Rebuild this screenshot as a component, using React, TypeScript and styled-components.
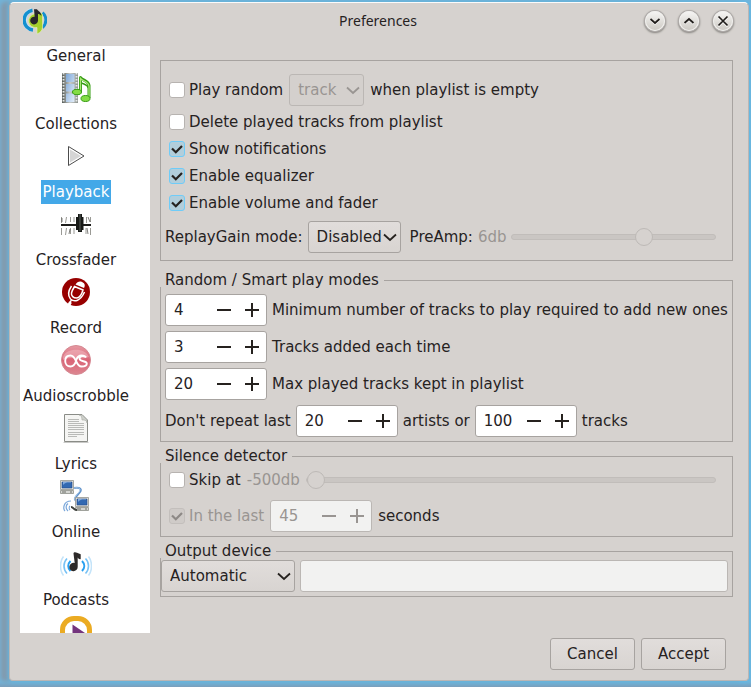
import React, { useState } from "react";
import styled, { createGlobalStyle, css } from "styled-components";

const color = {
  window: "#d6d2cf",
  text: "#26221f",
  muted: "#999592",
  line: "#a7a3a0",
  faintLine: "#bbb7b4",
  highlight: "#43a8e8",
};

const GlobalStyle = createGlobalStyle`
  * { box-sizing: border-box; }
  body { margin: 0; font: 15px/20px "DejaVu Sans", sans-serif; color: ${color.text}; }
  button, input, select { font: inherit; color: inherit; margin: 0; }
`;

const Desktop = styled.div`
  height: 100vh;
  min-height: 640px;
  padding: 2px 2px 6px 9px;
  background: linear-gradient(to bottom, #72b3d8 calc(100% - 5px), #7b9dba);
  display: flex;
`;

const Window = styled.main`
  flex: 1;
  min-width: 0;
  display: flex;
  flex-direction: column;
  background: ${color.window};
  border: 1px solid #bab6b5;
  border-top-color: #fbfbfb;
  border-radius: 5px 5px 4px 4px;
  box-shadow: 0 0 5px 1px #5fbbe9, -8px 0 4px 0 #8598aa;
`;

const TitleBar = styled.header`
  display: grid;
  grid-template-columns: 1fr auto 1fr;
  align-items: center;
  height: 36px;
  padding: 0 15px 0 13px;
  flex: none;
`;

const Title = styled.h1`
  margin: 0;
  font: 14px/20px "Noto Sans", sans-serif;
`;

const WindowControls = styled.div`
  display: flex;
  justify-content: flex-end;
  gap: 14px;
`;

const RoundButton = styled.button`
  width: 20px;
  height: 20px;
  padding: 0;
  border: 0;
  border-radius: 50%;
  display: grid;
  place-items: center;
  background: linear-gradient(#f7f6f5, #cbc8c2);
  box-shadow: 0 0 0 1px #b0acaa, 0 1px 2px 1px #83807d, inset 0 0 0 1px #f0efed;
  svg { display: block; }
`;

const Body = styled.div`
  flex: 1;
  min-height: 0;
  display: flex;
  gap: 10px;
  padding: 7px 15px 0 10px;
`;

const Sidebar = styled.nav`
  flex: none;
  width: 130px;
  padding-right: 18px;
  overflow: hidden;
  background: #fff;
`;

const PageList = styled.ul`
  list-style: none;
  margin: -2px 0 0;
  padding: 0;
`;

const PageLink = styled.a`
  display: flex;
  flex-direction: column;
  align-items: center;
  color: inherit;
  text-decoration: none;
  svg { display: block; margin: 4px 0 8px; }
`;

const PageName = styled.span<{ $active?: boolean }>`
  line-height: 24px;
  padding: 0 2px;
  white-space: nowrap;
  ${(p) => p.$active && css`background: ${color.highlight}; color: #fff;`}
`;

const Settings = styled.form`
  flex: 1;
  min-width: 0;
  padding-top: 14px;
`;

const Group = styled.fieldset<{ $pad: string; $gap?: number; $top?: number }>`
  margin: ${(p) => p.$top ?? 0}px 0 0;
  min-width: 0;
  border: 1px solid ${color.line};
  padding: ${(p) => p.$pad};
  display: flex;
  flex-direction: column;
  gap: ${(p) => p.$gap ?? 0}px;
`;

const Legend = styled.legend`
  margin-left: -1px;
  padding: 0 5px;
  line-height: 14px;
  background: ${color.window};
`;

const Row = styled.div<{ $gap?: number; $height?: number; $indent?: number }>`
  display: flex;
  align-items: center;
  gap: ${(p) => p.$gap ?? 5}px;
  height: ${(p) => p.$height ?? 32}px;
  padding-left: ${(p) => p.$indent ?? 4}px;
  white-space: nowrap;
`;

const Muted = styled.output`
  color: ${color.muted};
`;

const CheckLabel = styled.label<{ $disabled?: boolean }>`
  display: flex;
  align-items: center;
  gap: 4px;
  color: ${(p) => (p.$disabled ? color.muted : "inherit")};
`;

const checkMark = (stroke: string) =>
  `url("data:image/svg+xml,%3Csvg xmlns='http://www.w3.org/2000/svg' width='14' height='14' fill='none' stroke='%23${stroke}' stroke-width='2.2'%3E%3Cpath d='M2 6.5 5.8 10.2 12 4'/%3E%3C/svg%3E")`;

const Tick = styled.input`
  appearance: none;
  width: 16px;
  height: 16px;
  border: 1px solid #b7b3b0;
  border-radius: 3px;
  background: #fff;
  &:checked {
    border-color: #6fccf8;
    background: #b2cedb ${checkMark("26221f")} center / 14px no-repeat;
  }
  &:disabled {
    border-color: #c3bfbc;
    background: #cfcbc8 ${checkMark("8d8986")} center / 14px no-repeat;
  }
`;

const SelectBox = styled.span<{ $width: number }>`
  display: grid;
  align-items: center;
  flex: none;
  width: ${(p) => p.$width}px;
  > * { grid-area: 1 / 1; }
  svg { justify-self: end; margin-right: 4px; pointer-events: none; }
`;

const Select = styled.select`
  appearance: none;
  width: 100%;
  height: 32px;
  padding: 0 0 0 8px;
  border: 1px solid ${color.line};
  border-radius: 3px;
  background: linear-gradient(#e1dddb, #d8d4d1);
  &:disabled {
    opacity: 1;
    color: ${color.muted};
    border-color: ${color.faintLine};
    background: #d4d0cd;
  }
`;

const SpinBox = styled.span<{ $disabled?: boolean }>`
  display: flex;
  flex: none;
  width: 102px;
  height: 32px;
  border: 1px solid ${(p) => (p.$disabled ? color.faintLine : color.line)};
  border-radius: 3px;
  overflow: hidden;
  background: ${(p) => (p.$disabled ? "#f2f2f1" : "#fff")};
  color: ${(p) => (p.$disabled ? color.muted : "inherit")};
`;

const SpinInput = styled.input`
  flex: 1;
  min-width: 0;
  border: 0;
  padding: 0 0 0 8px;
  background: transparent;
`;

const StepButton = styled.button`
  width: 28px;
  padding: 0;
  border: 0;
  background: transparent;
  display: grid;
  place-items: center;
`;

const Slider = styled.input`
  appearance: none;
  flex: 1;
  min-width: 0;
  height: 20px;
  background: transparent;
  &::-webkit-slider-runnable-track {
    height: 6px;
    border: 1px solid #c1bdba;
    border-radius: 3px;
    background: #cac6c3;
  }
  &::-webkit-slider-thumb {
    appearance: none;
    width: 18px;
    height: 18px;
    margin-top: -7px;
    border: 1px solid #bdb9b6;
    border-radius: 50%;
    background: ${color.window};
  }
`;

const DeviceInput = styled.input`
  flex: 1;
  min-width: 0;
  height: 32px;
  padding: 0 8px;
  border: 1px solid ${color.faintLine};
  border-radius: 3px;
  background: #f2f2f1;
`;

const Footer = styled.footer`
  display: flex;
  justify-content: flex-end;
  gap: 6px;
  padding: 5px 22px 10px;
  flex: none;
`;

const DialogButton = styled.button`
  width: 85px;
  height: 32px;
  padding: 0;
  border: 1px solid ${color.line};
  border-radius: 3px;
  background: linear-gradient(#e1dddb, #d8d4d1);
`;

const Logo = () => (
  <svg width="24" height="28" viewBox="0 0 24 28" fill="none" aria-hidden="true">
    <path d="M9 3.300A10 10 0 0 0 9 22.700" stroke="#cfe6f2" strokeWidth="4.600" />
    <path d="M9.500 3.200A10 10 0 0 0 10 23" stroke="#1390d0" strokeWidth="3.400" />
    <path d="M19.500 5.500a10 10 0 0 1 0 15" stroke="#1390d0" strokeWidth="3" />
    <path d="M15 5.500c2-.3 4 .5 4.500 2V20c0 3.500-2 5.500-5.500 7v-6.500A6.800 6.800 0 1 1 11 7z" fill="#a5cf2c" stroke="#dfeeb4" strokeWidth=".7" />
    <path d="M11 2.200h3c1 2 4.500 2.500 4.300 6.800-1-1.600-2-2-3.300-2v6.500a3.900 3.900 0 1 1-3.300-3.800z" fill="#29252b" />
  </svg>
);

const Chevron = ({ muted }: { muted?: boolean }) => (
  <svg width="14" height="9" viewBox="0 0 14 9" fill="none" stroke={muted ? color.muted : color.text} strokeWidth="1.8" aria-hidden="true">
    <path d="m1 1.500 6 5.500 6-5.500" />
  </svg>
);

const ControlGlyph = ({ d }: { d: string }) => (
  <svg width="12" height="12" viewBox="0 0 12 12" fill="none" aria-hidden="true">
    <path d={d} stroke="#fff" strokeWidth="1.5" transform="translate(0 1)" />
    <path d={d} stroke="#211e1c" strokeWidth="1.7" />
  </svg>
);

const CollectionsIcon = () => (
  <svg width="32" height="32" viewBox="0 0 32 32" aria-hidden="true">
    <defs>
      <linearGradient id="frame" x2="1" y2="1"><stop stopColor="#7fa8d8" /><stop offset="1" stopColor="#e3eefa" /></linearGradient>
      <linearGradient id="reel"><stop stopColor="#555b58" /><stop offset=".5" stopColor="#c8ccca" /><stop offset="1" stopColor="#8d9390" /></linearGradient>
    </defs>
    <path d="M2 1h16v30H2z" fill="url(#reel)" />
    <path d="M3.500 1v30M16.500 1v30" stroke="#e5e8e6" strokeWidth="1.8" strokeDasharray="1.5 1.5" />
    <path d="M6 2h8.500v8H6zM6 12h8.500v7.500H6zM6 21.500h8.500V30H6z" fill="url(#frame)" />
    <path d="M20.500 20V5.500c2 3 8 3 8.500 8V26" fill="none" stroke="#359b12" strokeWidth="3" strokeLinejoin="round" />
    <path d="M20.500 10c2 2.500 7 2 8 6" fill="none" stroke="#359b12" strokeWidth="1.5" />
    <path d="M20.500 20V6.500c2 2.500 8 3 8.500 7.500v12" fill="none" stroke="#a9ea78" strokeWidth="1.3" />
    <ellipse cx="17" cy="20" rx="4.500" ry="2.700" fill="#83dc45" stroke="#359b12" />
    <ellipse cx="25.500" cy="26.500" rx="4.500" ry="3" fill="#83dc45" stroke="#359b12" />
  </svg>
);

const PlaybackIcon = () => (
  <svg width="32" height="32" viewBox="0 0 32 32" aria-hidden="true">
    <path d="M8.500 6.500 24 16 8.500 25.500z" fill="#fff" stroke="#4c4c4c" />
    <path d="M10 9.500 21 16l-11 6.500z" fill="#d5d5d5" />
  </svg>
);

const CrossfaderIcon = () => (
  <svg width="32" height="32" viewBox="0 -1 32 32" fill="none" aria-hidden="true">
    <path d="M1.500 8v6M6.500 8l-1 6M10.500 8v5M14 8v5M26.500 8v6M30.500 8v5M1.500 19v7M6.500 19l-1 7M10.500 19v6M14 19v6M26 19v6M30.500 19v7" stroke="#9a9a95" />
    <path d="M2 9v4M10 20l-1 5M28 8l2 5M27 19l1 6" stroke="#4b4b46" strokeWidth=".7" />
    <path d="M1 16h30" stroke="#1d1d1b" strokeWidth="2" />
    <path d="M16 8h2V5h4v3h1.500v13H22v2h-4v-2h-2z" fill="#171916" />
    <path d="M20 5v17" stroke="#6a706b" strokeWidth=".8" />
  </svg>
);

const RecordIcon = () => (
  <svg width="32" height="32" viewBox="0 0 32 32" fill="none" aria-hidden="true">
    <circle cx="16" cy="16" r="14" fill="#970000" />
    <path d="m15.500 8.500 8.500 3.500c1.500-3 .5-5-2-6-2.500-1-5 0-6.500 2.500z" fill="#fff" />
    <path d="m14.500 10.500 8.500 3.500c-1.500 5-3.500 8-6.500 8s-5.500-2-5-5c.4-2 1.500-4 3-6.500z" stroke="#fff" strokeWidth="1.500" />
    <path d="M11.500 10c-3 4.500-4 9.500-1 13 4 3.500 10 2 14-7M11.500 23.500 9 29" stroke="#fff" strokeWidth="1.500" />
    <path d="m10.500 26-1.500 3" stroke="#fff" strokeWidth="3" />
  </svg>
);

const ScrobbleIcon = () => (
  <svg width="32" height="32" viewBox="0 0 32 32" fill="none" aria-hidden="true">
    <defs><linearGradient id="rose" x2="0" y2="1"><stop stopColor="#e69aa3" /><stop offset=".5" stopColor="#da6476" /><stop offset="1" stopColor="#dc8690" /></linearGradient></defs>
    <circle cx="16" cy="16" r="14.500" fill="url(#rose)" stroke="#d58992" />
    <path d="M3 13C6 4 25 3 29 13c-6 3-18-1-26 3z" fill="#f3bec5" opacity=".5" />
    <path d="M21.500 22.500c-6 0-5-11-11-11-3.500 0-5.300 2.500-5.300 5.500s2 5.500 5.300 5.500c4.500 0 5-4 6-7 .8-2.500 2.500-4 5-4 2 0 3.800.5 4.500 2M26 13.500c-1.500-2-6.500-2-6.500 1 0 3.500 7.300 2 7.300 5 0 2-2.300 3-5.300 3" stroke="#fff" strokeWidth="1.900" />
  </svg>
);

const LyricsIcon = () => (
  <svg width="32" height="32" viewBox="0 0 32 32" fill="none" aria-hidden="true">
    <path d="M3.500 30.500h25" stroke="#c9c9c7" />
    <path d="M4.500 2.500h17.500l5.500 5.500v21.500h-23z" fill="#f5f5f3" stroke="#8a8c87" />
    <path d="M19 3c2 0 3 2 3 5 3-.5 5 1 5 3V8l-5-5z" fill="#cfd1cc" stroke="#a6a9a3" strokeWidth=".6" />
    <path d="M8 7.500h11M8 9.500h11M8 11.500h16M8 13.500h16M8 15.500h16M8 17.500h16M8 20.500h16M8 22.500h16M8 24.500h9" stroke="#b9bab7" />
  </svg>
);

const Computer = ({ x, y }: { x: number; y: number }) => (
  <g transform={`translate(${x} ${y})`}>
    <path d="M.5.500h13v9H.500z" fill="#dedfdc" stroke="#94968f" strokeWidth=".8" />
    <path d="M2 2h10v6H2z" fill="#3269b2" stroke="#244c86" strokeWidth=".6" />
    <path d="M3 5c2-3 5-2.500 8-2.500V2H3z" fill="#82abdf" />
    <path d="M.500 10.500h13v3H.500z" fill="#d5d6d2" stroke="#8d8f88" strokeWidth=".8" />
    <path d="M2 12h4M10 12h2" stroke="#6d6f69" />
  </g>
);

const OnlineIcon = () => (
  <svg width="32" height="32" viewBox="0 0 32 32" fill="none" aria-hidden="true">
    <path d="M14 8c6-1 8 1 6 4-3 4-8 7-3 9" stroke="#6193cb" strokeWidth="2" />
    <path d="M14 8c6-1 7 1 5 4-3 4-7 7-2 9" stroke="#bad5f0" strokeWidth=".8" />
    <Computer x={0} y={0} />
    <Computer x={15} y={17} />
    <path d="M11 27c3 0 2 3 6 3" stroke="#3d403c" strokeWidth="2" />
    <path d="M10 26c-1 1-1 3 0 4M8 23.500c-2.500 2-2.500 5 0 7.500M11 21c-8 0-8 8-6 10" stroke="#7aa7da" strokeWidth="1.2" />
  </svg>
);

const PodcastsIcon = () => (
  <svg width="32" height="32" viewBox="0 -2 32 32" fill="none" strokeWidth="2" aria-hidden="true">
    <path d="M10.500 11c-3 3-3 7 0 10M22 11c3 3 3 7 0 10" stroke="#279ff0" />
    <path d="M7 8.500c-4 4-4 11 0 15M25.500 8.500c4 4 4 11 0 15" stroke="#77c2f5" strokeWidth="1.6" />
    <path d="M3.500 6.500c-4 5-4 14 0 19M28.500 6.500c4 5 4 14 0 19" stroke="#c5e4f9" strokeWidth="1.6" />
    <path d="M13.500 3.500c0-1.500 2-1.700 3.500-.7l3.700 1.500v4.700c-1.500.6-2.200-.4-3-1.500V17a4.200 4.200 0 1 1-3-4z" fill="#2d2a29" />
  </svg>
);

const RadioIcon = () => (
  <svg width="32" height="32" viewBox="0 0 32 32" fill="none" aria-hidden="true">
    <rect x="2.500" y="2.500" width="27" height="27" rx="11.500" fill="#fff" stroke="#ebab22" strokeWidth="5" />
    <path d="M12.500 8.500 25 17l-12.500 8z" fill="#74347d" />
  </svg>
);

const pages: { name: string; Icon?: React.FC }[] = [
  { name: "General" },
  { name: "Collections", Icon: CollectionsIcon },
  { name: "Playback", Icon: PlaybackIcon },
  { name: "Crossfader", Icon: CrossfaderIcon },
  { name: "Record", Icon: RecordIcon },
  { name: "Audioscrobble", Icon: ScrobbleIcon },
  { name: "Lyrics", Icon: LyricsIcon },
  { name: "Online", Icon: OnlineIcon },
  { name: "Podcasts", Icon: PodcastsIcon },
  { name: "", Icon: RadioIcon },
];

function Check({ children, checked, disabled }: { children: React.ReactNode; checked?: boolean; disabled?: boolean }) {
  return (
    <CheckLabel $disabled={disabled}>
      <Tick type="checkbox" defaultChecked={checked} disabled={disabled} />
      {children}
    </CheckLabel>
  );
}

function Spin({ id, initial, label, disabled }: { id: string; initial: number; label: string; disabled?: boolean }) {
  const [value, setValue] = useState(initial);
  return (
    <SpinBox $disabled={disabled}>
      <SpinInput
        id={id}
        aria-label={label}
        inputMode="numeric"
        value={value}
        disabled={disabled}
        onChange={(e) => setValue(Number(e.target.value) || 0)}
      />
      <StepButton type="button" aria-label="Decrease" disabled={disabled} onClick={() => setValue(value - 1)}>
        <svg width="14" height="14" stroke="currentColor" strokeWidth="2"><path d="M0 7h14" /></svg>
      </StepButton>
      <StepButton type="button" aria-label="Increase" disabled={disabled} onClick={() => setValue(value + 1)}>
        <svg width="14" height="14" stroke="currentColor" strokeWidth="2"><path d="M0 7h14M7 0v14" /></svg>
      </StepButton>
    </SpinBox>
  );
}

export default function App() {
  return (
    <Desktop>
      <GlobalStyle />
      <Window>
        <TitleBar>
          <Logo />
          <Title>Preferences</Title>
          <WindowControls>
            <RoundButton type="button" aria-label="Minimize"><ControlGlyph d="m1.500 4 4.500 4 4.500-4" /></RoundButton>
            <RoundButton type="button" aria-label="Maximize"><ControlGlyph d="m1.500 8 4.500-4 4.500 4" /></RoundButton>
            <RoundButton type="button" aria-label="Close"><ControlGlyph d="m1.500 1.500 9 9m0-9-9 9" /></RoundButton>
          </WindowControls>
        </TitleBar>

        <Body>
          <Sidebar>
            <PageList>
              {pages.map(({ name, Icon }) => (
                <li key={name}>
                  <PageLink href="#" aria-current={name === "Playback" ? "page" : undefined}>
                    {Icon && <Icon />}
                    <PageName $active={name === "Playback"}>{name}</PageName>
                  </PageLink>
                </li>
              ))}
            </PageList>
          </Sidebar>

          <Settings id="preferences" onSubmit={(e) => e.preventDefault()}>
            <Group $pad="13px 16px 5px 0" $gap={5}>
              <Row $indent={8} $gap={6}>
                <Check>Play random</Check>
                <SelectBox $width={75}>
                  <Select disabled aria-label="What to play"><option>track</option></Select>
                  <Chevron muted />
                </SelectBox>
                <span>when playlist is empty</span>
              </Row>
              <Row $indent={8} $height={22}><Check>Delete played tracks from playlist</Check></Row>
              <Row $indent={8} $height={22}><Check checked>Show notifications</Check></Row>
              <Row $indent={8} $height={22}><Check checked>Enable equalizer</Check></Row>
              <Row $indent={8} $height={22}><Check checked>Enable volume and fader</Check></Row>
              <Row $height={36}>
                <label htmlFor="gain">ReplayGain mode:</label>
                <SelectBox $width={93}>
                  <Select id="gain"><option>Disabled</option></Select>
                  <Chevron />
                </SelectBox>
                <Row $gap={5}>
                  <label htmlFor="preamp">PreAmp:</label>
                  <Muted>6db</Muted>
                </Row>
                <Slider id="preamp" type="range" min={-18} max={18} defaultValue={6} disabled />
              </Row>
            </Group>

            <Group $pad="7px 4px 4px 0" $gap={5} $top={12}>
              <Legend>Random / Smart play modes</Legend>
              <Row>
                <Spin id="min-tracks" initial={4} label="Minimum number of tracks" />
                <label htmlFor="min-tracks">Minimum number of tracks to play required to add new ones</label>
              </Row>
              <Row>
                <Spin id="added" initial={3} label="Tracks added each time" />
                <label htmlFor="added">Tracks added each time</label>
              </Row>
              <Row>
                <Spin id="kept" initial={20} label="Max played tracks kept in playlist" />
                <label htmlFor="kept">Max played tracks kept in playlist</label>
              </Row>
              <Row>
                <span>Don't repeat last</span>
                <Spin id="artists" initial={20} label="Artists not repeated" />
                <label htmlFor="artists">artists or</label>
                <Spin id="tracks" initial={100} label="Tracks not repeated" />
                <label htmlFor="tracks">tracks</label>
              </Row>
            </Group>

            <Group $pad="7px 16px 4px 0" $gap={10} $top={7}>
              <Legend>Silence detector</Legend>
              <Row $indent={8} $gap={6} $height={20}>
                <Check>Skip at</Check>
                <Muted>-500db</Muted>
                <Slider type="range" aria-label="Silence threshold" min={-500} max={0} defaultValue={-500} disabled />
              </Row>
              <Row $indent={8} $gap={6}>
                <Check checked disabled>In the last</Check>
                <Spin id="seconds" initial={45} label="Seconds of silence" disabled />
                <label htmlFor="seconds">seconds</label>
              </Row>
            </Group>

            <Group $pad="2px 4px 4px 0" $top={7}>
              <Legend>Output device</Legend>
              <Row $indent={0}>
                <SelectBox $width={134}>
                  <Select aria-label="Output device"><option>Automatic</option></Select>
                  <Chevron />
                </SelectBox>
                <DeviceInput aria-label="Device name" disabled />
              </Row>
            </Group>
          </Settings>
        </Body>

        <Footer>
          <DialogButton type="button">Cancel</DialogButton>
          <DialogButton type="submit" form="preferences">Accept</DialogButton>
        </Footer>
      </Window>
    </Desktop>
  );
}
